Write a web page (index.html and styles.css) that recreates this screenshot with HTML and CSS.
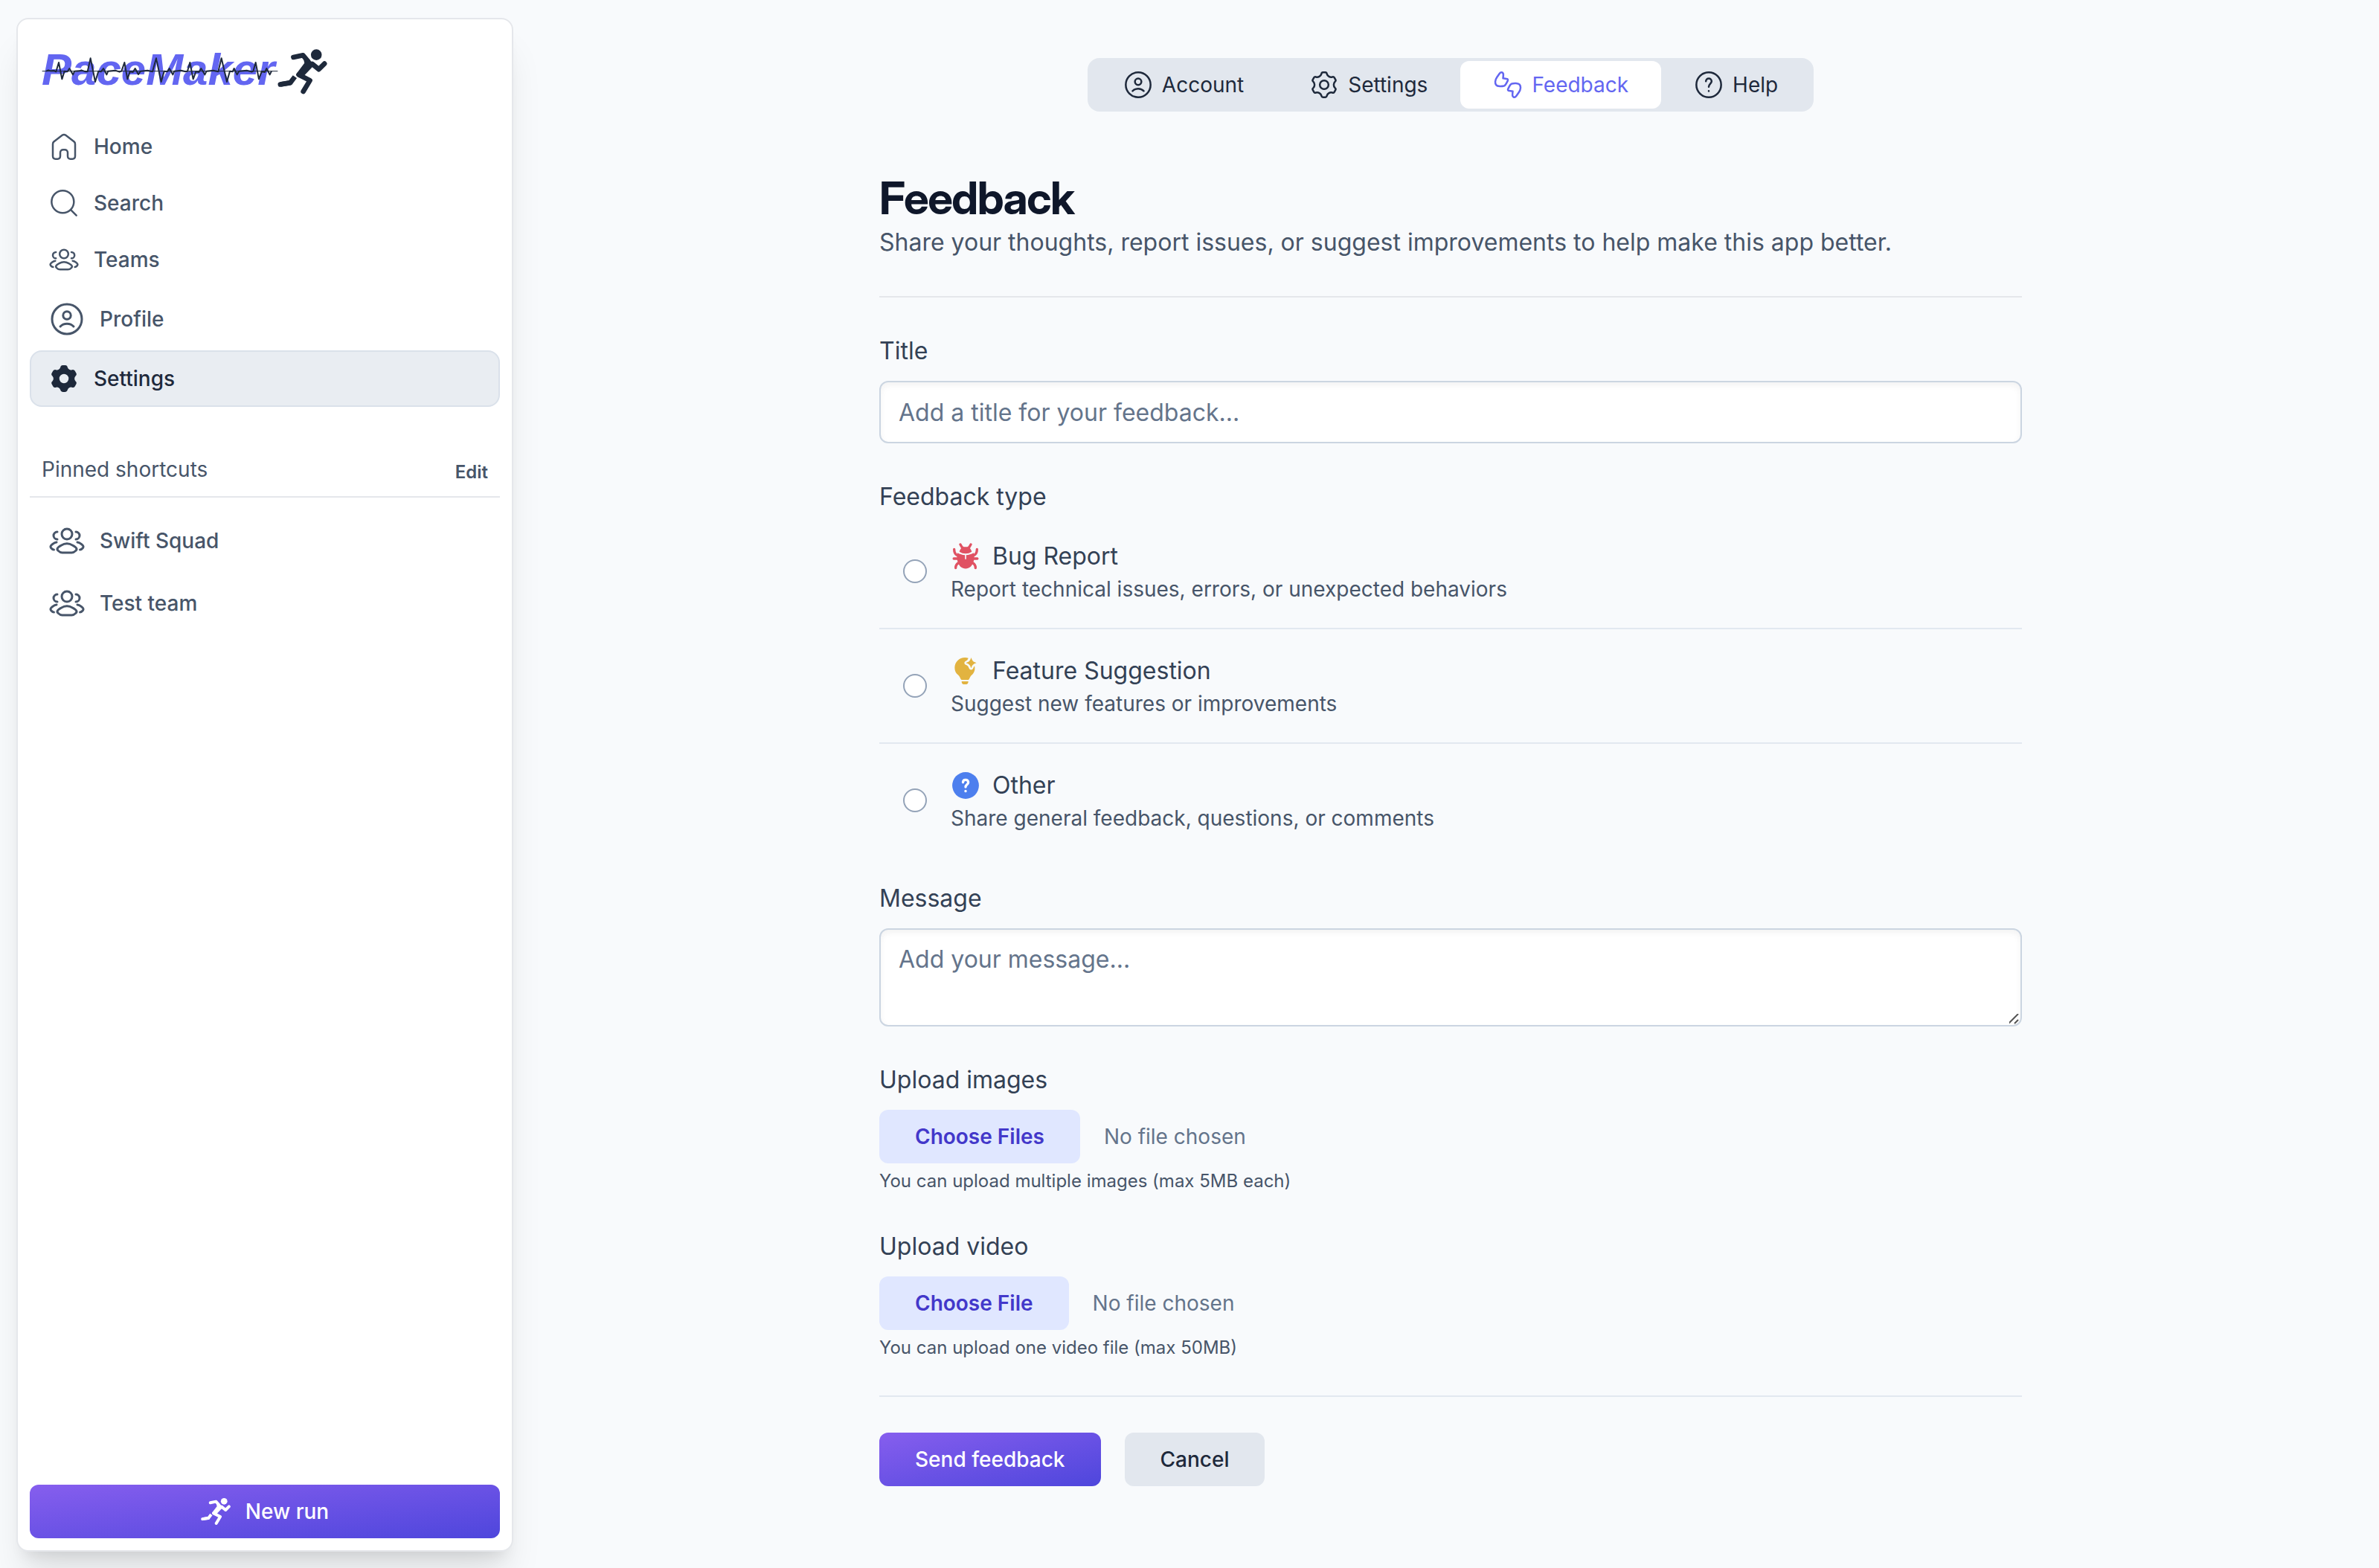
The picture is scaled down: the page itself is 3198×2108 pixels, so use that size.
FILE: index.html
```html
<!DOCTYPE html>
<html lang="en">
<head>
<meta charset="utf-8">
<meta name="viewport" content="width=device-width, initial-scale=1">
<title>Feedback - PaceMaker</title>
<link rel="stylesheet" href="styles.css">
</head>
<body>
<svg class="sprite" aria-hidden="true">
  <symbol id="i-group" viewBox="0 0 24 24">
    <path d="M20.774 18C21.523 18 22.119 17.529 22.655 16.869C23.75 15.519 21.951 14.441 21.265 13.913C20.568 13.376 19.789 13.071 19 13M18 11C19.381 11 20.5 9.881 20.5 8.5C20.5 7.119 19.381 6 18 6"/>
    <path d="M3.226 18C2.477 18 1.881 17.529 1.346 16.869C0.25 15.519 2.049 14.441 2.735 13.913C3.432 13.376 4.211 13.071 5 13M5.5 11C4.119 11 3 9.881 3 8.5C3 7.119 4.119 6 5.5 6"/>
    <path d="M8.084 15.111C7.062 15.743 4.383 17.033 6.015 18.647C6.812 19.436 7.7 20 8.816 20H15.184C16.3 20 17.188 19.436 17.985 18.647C19.617 17.033 16.938 15.743 15.916 15.111C13.52 13.63 10.48 13.63 8.084 15.111Z"/>
    <circle cx="12" cy="7.5" r="3.5"/>
  </symbol>
  <symbol id="i-user" viewBox="0 0 24 24">
    <circle cx="12" cy="12" r="10"/>
    <circle cx="12" cy="9.5" r="2.6"/>
    <path d="M7.5 17C9.8 14.5 14.2 14.5 16.5 17"/>
  </symbol>
  <symbol id="i-gear" viewBox="0 0 24 24">
    <path d="M11 2H13Q14 2 14.2 3.2C14.7 5 16.71 6.16 18.52 5.69Q19.66 5.27 20.16 6.13L21.16 7.87Q21.66 8.73 20.72 9.51C19.41 10.84 19.41 13.16 20.72 14.49Q21.66 15.27 21.16 16.13L20.16 17.87Q19.66 18.73 18.52 18.31C16.71 17.84 14.7 19 14.2 20.8Q14 22 13 22H11Q10 22 9.8 20.8C9.3 19 7.29 17.84 5.48 18.31Q4.34 18.73 3.84 17.87L2.84 16.13Q2.34 15.27 3.28 14.49C4.59 13.16 4.59 10.84 3.28 9.51Q2.34 8.73 2.84 7.87L3.84 6.13Q4.34 5.27 5.48 5.69C7.29 6.16 9.3 5 9.8 3.2Q10 2 11 2Z"/>
    <circle cx="12" cy="12" r="3.5"/>
  </symbol>
  <symbol id="i-gear-solid" viewBox="0 0 24 24">
    <path fill="currentColor" fill-rule="evenodd" d="M11 2H13Q14 2 14.2 3.2C14.7 5 16.71 6.16 18.52 5.69Q19.66 5.27 20.16 6.13L21.16 7.87Q21.66 8.73 20.72 9.51C19.41 10.84 19.41 13.16 20.72 14.49Q21.66 15.27 21.16 16.13L20.16 17.87Q19.66 18.73 18.52 18.31C16.71 17.84 14.7 19 14.2 20.8Q14 22 13 22H11Q10 22 9.8 20.8C9.3 19 7.29 17.84 5.48 18.31Q4.34 18.73 3.84 17.87L2.84 16.13Q2.34 15.27 3.28 14.49C4.59 13.16 4.59 10.84 3.28 9.51Q2.34 8.73 2.84 7.87L3.84 6.13Q4.34 5.27 5.48 5.69C7.29 6.16 9.3 5 9.8 3.2Q10 2 11 2ZM12 7.5a4.5 4.5 0 1 0 0 9a4.5 4.5 0 1 0 0-9Z"/>
  </symbol>
  <symbol id="i-runner" viewBox="1000 48 201 184">
    <circle cx="1157" cy="71" r="22" fill="currentColor" stroke="none"/>
    <g stroke="currentColor" stroke-width="20" stroke-linecap="round" stroke-linejoin="round" fill="none">
      <path d="M1064 81L1103 73L1124 98"/>
      <path d="M1140 108L1167 130L1190 107"/>
      <path d="M1086 152L1131 175L1104 220"/>
      <path stroke-linecap="butt" d="M1011 191L1052 184L1070 160"/>
      <path d="M1011 191L1050 185"/>
      <path d="M1110 86L1144 110L1106 150L1080 151L1114 106Z" fill="currentColor" stroke-width="10"/>
    </g>
  </symbol>
</svg>

<div class="layout">
  <aside class="sidebar">
    <a class="logo" href="#" aria-label="PaceMaker">
      <svg width="388" height="85" viewBox="0 50 388 85">
        <text class="logo-text" x="0" y="114">PaceMaker</text>
        <g transform="translate(-16 50) scale(.33333)" fill="none" stroke="#1e293b">
          <path stroke-width="3" d="M50 137H1000"/>
          <path stroke-width="6" stroke-linejoin="round" d="M66 137L75 133L85 136L98 135L106 139L117 102L130 169L140 137L152 139L160 126L174 151L181 137L200 136L208 133L225 139L233 139L245 85L264 180L277 137L287 139L297 126L310 151L316 137L345 134L362 140L370 137L382 102L394 169L404 139L416 141L425 126L438 150L447 137L475 134L495 139L510 85L530 180L542 137L555 139L563 126L577 151L583 137L610 134L628 139L636 137L646 102L659 169L670 139L682 141L691 126L706 151L713 137L740 134L760 139L773 85L795 180L807 137L818 139L824 126L836 151L844 137L875 134L895 140L901 137L911 102L924 169L935 139L948 141L955 126L968 151L975 137"/>
        </g>
        <use href="#i-runner" x="317" y="66" width="67" height="61" color="#1e293b"/>
      </svg>
    </a>

    <nav aria-label="Main">
      <a class="nav-item" href="#">
        <svg class="icon" viewBox="0 0 24 24"><path d="M3 10C3 9.2 3.3 8.6 3.8 8.1L10.6 2.9C11.5 2.2 12.5 2.2 13.4 2.9L20.2 8.1C20.7 8.6 21 9.2 21 10V19.7C21 21.2 20.2 22 18.8 22H17.2C15.8 22 15 21.2 15 19.7V17C15 15.6 14 14.6 12.6 14.6H11.4C10 14.6 9 15.6 9 17V19.7C9 21.2 8.2 22 6.8 22H5.2C3.8 22 3 21.2 3 19.7Z"/></svg>
        Home
      </a>
      <a class="nav-item" href="#">
        <svg class="icon" viewBox="0 0 24 24"><circle cx="11" cy="11" r="9"/><path d="M17.5 17.5L22 22"/></svg>
        Search
      </a>
      <a class="nav-item" href="#"><svg class="icon"><use href="#i-group"/></svg>Teams</a>
      <a class="nav-item" href="#"><svg class="icon icon-lg"><use href="#i-user"/></svg>Profile</a>
      <a class="nav-item active" href="#" aria-current="page"><svg class="icon"><use href="#i-gear-solid"/></svg>Settings</a>
    </nav>

    <div class="pinned-head">
      <span>Pinned shortcuts</span>
      <button type="button" class="edit">Edit</button>
    </div>
    <nav aria-label="Pinned shortcuts">
      <a class="nav-item" href="#"><svg class="icon icon-lg"><use href="#i-group"/></svg>Swift Squad</a>
      <a class="nav-item" href="#"><svg class="icon icon-lg"><use href="#i-group"/></svg>Test team</a>
    </nav>

    <button type="button" class="btn btn-primary new-run">
      <svg class="icon"><use href="#i-runner"/></svg>New run
    </button>
  </aside>

  <main class="main">
    <nav class="tabs" aria-label="Settings sections">
      <a class="tab" href="#"><svg class="icon"><use href="#i-user"/></svg>Account</a>
      <a class="tab" href="#"><svg class="icon"><use href="#i-gear"/></svg>Settings</a>
      <a class="tab selected" href="#" aria-current="page">
        <svg class="icon" viewBox="0 0 24 24">
          <path id="thumb" d="M5.2 3L3.2 5.8C1.4 8.3 1.5 10.9 2.6 12.2C3.6 13.4 7.2 13.3 8.8 12.9C10.2 12.5 10.5 11.4 11.9 8.6C12.2 7.8 11.8 7.2 11 7.2L8.1 6.8L8.3 4.4C8.6 2 6.6 1.1 5.2 3Z"/>
          <use href="#thumb" transform="rotate(180 12 12)"/>
        </svg>
        Feedback
      </a>
      <a class="tab" href="#">
        <svg class="icon" viewBox="0 0 24 24"><circle cx="12" cy="12" r="10"/><path d="M9.7 9.2C9.7 7.9 10.7 6.9 12 6.9S14.3 7.9 14.3 9.2C14.3 11 12 11.4 12 13.6M12 16.9V17.1"/></svg>
        Help
      </a>
    </nav>

    <form class="form">
      <header class="form-head">
        <h1>Feedback</h1>
        <p>Share your thoughts, report issues, or suggest improvements to help make this app better.</p>
      </header>

      <div class="field">
        <label for="title">Title</label>
        <input class="control" id="title" type="text" placeholder="Add a title for your feedback...">
      </div>

      <fieldset class="types">
        <legend>Feedback type</legend>
        <label class="type">
          <input type="radio" name="type">
          <span>
            <span class="type-title">
              <svg class="icon bug" viewBox="0 0 24 24">
                <path fill="currentColor" stroke="none" d="M7 8.2C7.6 6 9 4.4 10 4.3H14C15 4.4 16.4 6 17 8.2C15.5 9.2 13.8 9.7 12 9.7S8.5 9.2 7 8.2ZM5.5 9.2C7.3 10.3 9.3 10.9 11.5 11V14.2H12.5V11C14.7 10.9 16.7 10.3 18.5 9.2C19 11 19 13 18.7 15C18 19.2 15.3 21.9 12 21.9S6 19.2 5.3 15C5 13 5 11 5.5 9.2Z"/>
                <path stroke-width="2" d="M7.8 2.4L8.8 4.2L10 5.5M16.2 2.4L15.2 4.2L14 5.5M2.8 6.3C2.8 8.8 3.5 10.3 5.5 11.2M21.2 6.3C21.2 8.8 20.5 10.3 18.5 11.2M2.5 13.8H6M21.5 13.8H18M4 21.3C4 19.5 4.7 18 6.7 17.2M20 21.3C20 19.5 19.3 18 17.3 17.2"/>
              </svg>
              Bug Report
            </span>
            <span class="type-desc">Report technical issues, errors, or unexpected behaviors</span>
          </span>
        </label>
        <label class="type">
          <input type="radio" name="type">
          <span>
            <span class="type-title">
              <svg class="icon bulb" viewBox="0 0 24 24">
                <path fill="currentColor" stroke="none" d="M14.2 1.7C13.8 2.9 13.3 3.6 12.1 4C10.7 4.5 10.7 6.5 12.1 7C13.7 7.6 14.2 8.2 14.8 9.9C15.4 11.4 17.5 11.4 18.1 9.9C18.4 9.1 18.7 8.5 19.2 8C20 11.3 18.8 13.8 16.8 15.5C15.5 16.6 15 19.2 14.2 19.2H8.8C8 19.2 7.5 16.6 6.2 15.5C4.2 13.9 3.2 12 3.2 9.4C3.2 4.8 6.9 1.2 11.5 1.2C12.5 1.2 13.4 1.4 14.2 1.7ZM8.8 20.4H14.2C14.2 22 13.5 22.8 12.5 22.8H10.5C9.5 22.8 8.8 22 8.8 20.4ZM16.5 1.2C17.4 3.9 18 4.6 20.8 5.5C18 6.4 17.4 7.1 16.5 9.8C15.6 7.1 15 6.4 12.2 5.5C15 4.6 15.6 3.9 16.5 1.2Z"/>
              </svg>
              Feature Suggestion
            </span>
            <span class="type-desc">Suggest new features or improvements</span>
          </span>
        </label>
        <label class="type">
          <input type="radio" name="type">
          <span>
            <span class="type-title">
              <svg class="icon other" viewBox="0 0 24 24">
                <circle cx="12" cy="12" r="10.75" fill="currentColor" stroke="none"/>
                <path stroke="#fff" stroke-width="2" d="M9.9 9.5C9.9 8.2 10.8 7.4 12 7.4S14.2 8.2 14.2 9.5C14.2 11.2 12 11.4 12 13.2M12 16.4V16.6"/>
              </svg>
              Other
            </span>
            <span class="type-desc">Share general feedback, questions, or comments</span>
          </span>
        </label>
      </fieldset>

      <div class="field">
        <label for="message">Message</label>
        <textarea class="control" id="message" rows="2" placeholder="Add your message..."></textarea>
      </div>

      <div class="field upload">
        <label for="images">Upload images</label>
        <input id="images" type="file" multiple>
        <p class="hint">You can upload multiple images (max 5MB each)</p>
      </div>

      <div class="field upload">
        <label for="video">Upload video</label>
        <input id="video" type="file">
        <p class="hint">You can upload one video file (max 50MB)</p>
      </div>

      <footer class="actions">
        <button type="submit" class="btn btn-primary">Send feedback</button>
        <button type="button" class="btn btn-muted">Cancel</button>
      </footer>
    </form>
  </main>
</div>
</body>
</html>
```
FILE: styles.css
```css
*, *::before, *::after { box-sizing: border-box; }

body, h1, p, fieldset, legend { margin: 0; padding: 0; border: 0; }

body {
  background: #f8fafc;
  color: #334155;
  font-family: Inter, "Liberation Sans", sans-serif;
  font-size: 32px;
  line-height: 48px;
}

a { color: inherit; text-decoration: none; }
button, input, textarea { font: inherit; }

.sprite { position: absolute; width: 0; height: 0; }

.icon {
  flex: none;
  width: 40px;
  height: 40px;
  fill: none;
  stroke: currentColor;
  stroke-width: 1.5px;
  stroke-linecap: round;
  stroke-linejoin: round;
}
.icon-lg { width: 48px; height: 48px; }

.layout {
  display: flex;
  gap: 12px;
  min-height: 100vh;
  padding: 24px 0 22px 22px;
}

/* Sidebar */
.sidebar {
  display: flex;
  flex-direction: column;
  flex: none;
  width: 668px;
  padding: 24px 16px 16px;
  background: #fff;
  border: 2px solid #e5e7eb;
  border-radius: 16px;
  box-shadow: 0 40px 50px -10px rgb(0 0 0 / .1), 0 16px 20px -12px rgb(0 0 0 / .1);
}
.logo { display: block; padding-left: 16px; margin-bottom: 24px; }
.logo svg { display: block; }
.logo-text {
  fill: #6366f1;
  font-family: "Liberation Sans", sans-serif;
  font-size: 60px;
  font-weight: 700;
  font-style: italic;
}

.nav-item {
  display: flex;
  align-items: center;
  gap: 20px;
  padding: 16px 24px;
  border: 2px solid transparent;
  border-radius: 16px;
  color: #475569;
  font-size: 28px;
  font-weight: 500;
  line-height: 40px;
}
.nav-item.active { background: #e9edf2; border-color: #dae1ea; color: #1e293b; }

.pinned-head {
  display: flex;
  align-items: flex-end;
  justify-content: space-between;
  margin: 64px 0 16px;
  padding: 0 16px 16px;
  border-bottom: 2px solid #e5e7eb;
  color: #475569;
  font-size: 28px;
  line-height: 40px;
}
.edit {
  padding: 0;
  border: 0;
  background: none;
  color: #475569;
  font-size: 24px;
  font-weight: 600;
  line-height: 32px;
}

/* Buttons */
.btn {
  display: flex;
  align-items: center;
  justify-content: center;
  gap: 20px;
  padding: 16px 48px;
  border: 0;
  border-radius: 12px;
  font-size: 28px;
  font-weight: 500;
  line-height: 40px;
}
.btn-primary { background: linear-gradient(to bottom right, #865eee, #4e46dc); color: #fff; }
.btn-muted { background: #e2e7ee; color: #1e293b; }
.new-run { margin-top: auto; }

/* Main column */
.main {
  display: flex;
  flex: 1;
  flex-direction: column;
  align-items: center;
  gap: 80px;
  min-width: 0;
  padding-top: 54px;
}
.tabs {
  display: flex;
  padding: 4px;
  border-radius: 16px;
  background: #e2e7ee;
}
.tab {
  display: flex;
  align-items: center;
  gap: 12px;
  padding: 12px 44px;
  border-radius: 12px;
  color: #1e293b;
  font-size: 28px;
  line-height: 40px;
}
.tab.selected { background: #fff; color: #6366f1; }

.form {
  display: flex;
  flex-direction: column;
  gap: 48px;
  width: 100%;
  max-width: 1536px;
}
.form-head { padding-bottom: 48px; border-bottom: 2px solid #e5e7eb; color: #475569; }
h1 {
  color: #0f172a;
  font-family: "Inter Display", Inter, "Liberation Sans", sans-serif;
  font-size: 60px;
  font-weight: 700;
  line-height: 72px;
  letter-spacing: -0.025em;
}

.field { display: flex; flex-direction: column; gap: 16px; }
.control {
  display: block;
  width: 100%;
  padding: 16px 24px;
  border: 2px solid #cbd5e1;
  border-radius: 12px;
  background: #fff;
  color: #334155;
  box-shadow: inset 0 4px 8px rgb(0 0 0 / .05);
}
input.control { height: 84px; }
textarea.control { resize: vertical; }
.control::placeholder { color: #64748b; opacity: 1; }
textarea::-webkit-scrollbar { width: 20px; height: 20px; }
textarea::-webkit-resizer {
  background: url("data:image/svg+xml,%3Csvg xmlns='http://www.w3.org/2000/svg' width='20' height='20'%3E%3Cpath d='M4 18L17 5M12 18L17 13' stroke='%23555' stroke-width='2'/%3E%3C/svg%3E") right bottom no-repeat;
}

.type {
  display: flex;
  align-items: center;
  gap: 32px;
  padding: 32px;
}
.type + .type { border-top: 2px solid #e2e8f0; }
.type:last-child { margin-bottom: -16px; }
.type input {
  appearance: none;
  flex: none;
  width: 32px;
  height: 32px;
  margin: 0;
  border: 2px solid #94a3b8;
  border-radius: 50%;
  background: #fff;
}
.type input:checked { border: 10px solid #4f46e5; }
.type-title { display: flex; align-items: center; gap: 16px; }
.type-desc { display: block; color: #475569; font-size: 28px; line-height: 40px; }
.bug { color: #e05263; }
.bulb { color: #e2b340; }
.other { color: #4d7fee; }

.upload input { color: #64748b; font-size: 28px; line-height: 40px; }
.upload input::file-selector-button {
  margin: 0 32px 0 0;
  padding: 16px 48px;
  border: 0;
  border-radius: 12px;
  background: #e0e7ff;
  color: #4338ca;
  font: inherit;
  font-weight: 600;
}
.hint { margin-top: -8px; color: #475569; font-size: 24px; line-height: 32px; }

.actions {
  display: flex;
  gap: 32px;
  padding-top: 48px;
  border-top: 2px solid #e2e8f0;
}
```
